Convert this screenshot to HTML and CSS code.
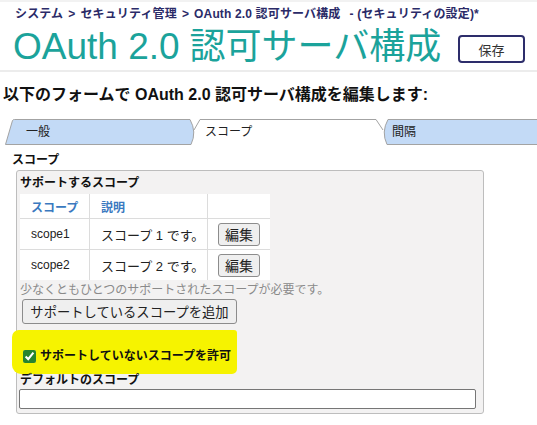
FILE: index.html
```html
<!DOCTYPE html>
<html lang="ja">
<head>
<meta charset="utf-8">
<link rel="stylesheet" href="styles.css">
</head>
<body>
<div class="header">
  <div class="crumbs"><span>システム</span><span>&gt;</span><span>セキュリティ管理</span><span>&gt;</span><span>OAuth 2.0 認可サーバ構成</span><span class="sub">- (セキュリティの設定)*</span></div>
  <div class="title-row">
    <h1 class="title"><span class="lat">OAuth 2.0</span> 認可サーバ構成</h1>
    <button class="save">保存</button>
  </div>
</div>
<h2 class="lead">以下のフォームで OAuth 2.0 認可サーバ構成を編集します:</h2>
<div class="tabs">
  <svg class="tabs-bg" width="537" height="26" viewBox="0 0 537 26">
    <path d="M191,26 Q196,13 194,11 L200,0.5 L376,0.5 L383,11 Q382,13 387,26 Z" fill="#ffffff"/>
    <path d="M194,11 L200,0.5 L376,0.5 L383,11" fill="none" stroke="#a3a3a3"/>
    <path d="M5.5,25.5 L12.5,1.5 Q13,0.5 14.5,0.5 L190,0.5 Q197,13 191,25.5 Z" fill="#c3daf6" stroke="#a3a3a3"/>
    <path d="M538,0.5 L388,0.5 Q381,13 387,25.5 L538,25.5" fill="#c3daf6" stroke="#a3a3a3"/>
  </svg>
  <span class="tab t1">一般</span>
  <span class="tab t2">スコープ</span>
  <span class="tab t3">間隔</span>
</div>
<div class="content">
  <div class="sec-label">スコープ</div>
  <div class="box">
    <div class="box-title">サポートするスコープ</div>
    <table class="scopes">
      <tr class="head"><th class="c1">スコープ</th><th class="c2">説明</th><th class="c3"></th></tr>
      <tr><td class="c1">scope1</td><td class="c2 desc">スコープ 1 です。</td><td class="c3"><button class="edit">編集</button></td></tr>
      <tr><td class="c1">scope2</td><td class="c2 desc">スコープ 2 です。</td><td class="c3"><button class="edit">編集</button></td></tr>
    </table>
    <div class="hint">少なくともひとつのサポートされたスコープが必要です。</div>
    <button class="add">サポートしているスコープを追加</button>
    <div class="hl">
      <label class="chk"><input type="checkbox" checked> サポートしていないスコープを許可</label>
    </div>
    <div class="def-label">デフォルトのスコープ</div>
    <input class="def-input" type="text">
  </div>
</div>
</body>
</html>
```
FILE: styles.css
```css
html, body {
  margin: 0;
  padding: 0;
  background: #ffffff;
}
body {
  font-family: "Liberation Sans", "Noto Sans CJK JP", sans-serif;
  color: #222;
  font-size: 12px;
}
.header {
  height: 68px;
  border-top: 2px solid #f2f2f2;
  border-bottom: 2px solid #ececec;
  padding: 0 12px 0 13px;
  box-sizing: content-box;
}
.crumbs {
  display: flex;
  gap: 5px;
  padding-left: 2px;
  padding-top: 4px;
  height: 16px;
  line-height: 16px;
  color: #2b2b68;
  font-size: 12px;
  font-weight: bold;
  white-space: nowrap;
  letter-spacing: 0.15px;
}
.crumbs .sub {
  margin-left: 4px;
}
.title-row {
  display: flex;
  justify-content: space-between;
  align-items: center;
  height: 46px;
}
.title {
  margin: 3px 0 0 0;
  font-weight: normal;
  font-size: 36px;
  line-height: 43px;
  color: #1ba39b;
  white-space: nowrap;
  font-family: "Liberation Sans", "Noto Sans CJK JP", sans-serif;
}
.title .lat {
  font-size: 37px;
}
.save {
  margin-top: 8px;
  width: 67px;
  height: 28px;
  background: #fff;
  border: 2px solid #2d2d6b;
  border-radius: 4px;
  font-family: "Noto Sans CJK JP", sans-serif;
  font-size: 13px;
  color: #333;
  padding: 0;
}
.lead {
  margin: 11px 0 0 0;
  padding-left: 3px;
  font-size: 16px;
  line-height: 24px;
  font-weight: bold;
  color: #111;
  white-space: nowrap;
}
.tabs {
  position: relative;
  margin-top: 12px;
  height: 26px;
  display: flex;
}
.tabs-bg {
  position: absolute;
  left: 0;
  top: 0;
}
.tab {
  position: relative;
  line-height: 26px;
  font-size: 12px;
  color: #222;
}
.t1 { padding-left: 26px; width: 179px; }
.t2 { width: 187px; }
.t3 { }
.content {
  padding-left: 12px;
}
.sec-label {
  margin-top: 7px;
  line-height: 16px;
  color: #111;
  font-weight: bold;
}
.box {
  margin: 2px 0 0 4px;
  width: 463px;
  background: #f3f2f2;
  border: 1px solid #bdbdbd;
  border-radius: 3px;
  padding: 4px 0 4px 3px;
}
.box-title {
  line-height: 16px;
  color: #111;
  font-weight: bold;
}
.scopes {
  margin-top: 3px;
  border-collapse: collapse;
  background: #fff;
  width: 250px;
}
.scopes th, .scopes td {
  padding: 0 0 0 11px;
  text-align: left;
  border-right: 1px solid #dcdcdc;
  border-bottom: 1px solid #dcdcdc;
}
.scopes tr:last-child td { border-bottom: none; }
.scopes .c3 { border-right: none; padding-left: 10px; }
.scopes .c1 { width: 58px; }
.scopes .c2 { width: 106px; }
.scopes .head th {
  height: 24px;
  color: #3a79bf;
  font-weight: bold;
  font-size: 12px;
}
.scopes td {
  height: 30px;
  font-size: 12px;
}
.scopes td.desc { font-size: 13px; }
.edit {
  width: 42px;
  height: 23px;
  padding: 0;
  background: #efefef;
  border: 1px solid #8c8c8c;
  border-radius: 3px;
  font-family: "Noto Sans CJK JP", sans-serif;
  font-size: 14px;
  color: #222;
  display: block;
}
.hint {
  margin-top: 2px;
  line-height: 16px;
  color: #8a8a8a;
}
.add {
  margin: 1px 0 0 2px;
  height: 25px;
  width: 215px;
  padding: 0;
  background: #efefef;
  border: 1px solid #8c8c8c;
  border-radius: 3px;
  font-family: "Noto Sans CJK JP", sans-serif;
  font-size: 13.3px;
  color: #222;
  display: block;
}
.hl {
  margin: 6px 0 0 -8px;
  width: 225px;
  height: 44px;
  box-sizing: border-box;
  padding: 18px 0 0 11px;
  background: #f6f300;
  border-radius: 7px 3px 5px 9px;
}
.chk {
  display: flex;
  align-items: center;
  gap: 4px;
  font-weight: bold;
  line-height: 16px;
  color: #111;
}
.chk input {
  margin: 0;
  width: 13px;
  height: 13px;
  accent-color: #27842f;
}
.def-label {
  position: relative;
  margin-top: -2px;
  line-height: 16px;
  color: #111;
  font-weight: bold;
}
.def-input {
  display: block;
  margin: 1px 0 0 -1px;
  width: 457px;
  height: 20px;
  box-sizing: border-box;
  border: 1px solid #767676;
  border-radius: 2px;
  background: #fff;
  padding: 0 3px;
}
```
